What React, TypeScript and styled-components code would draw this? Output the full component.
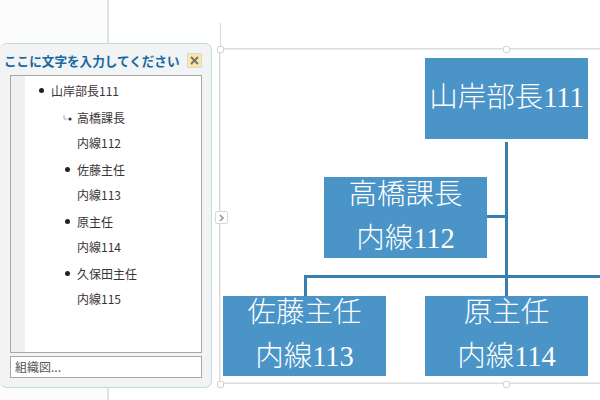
import React from "react";
import styled, { createGlobalStyle } from "styled-components";

const Global = createGlobalStyle`
  html, body { margin: 0; padding: 0; background: #fff; }
`;

const Page = styled.div`
  position: relative;
  width: 600px;
  height: 400px;
  overflow: hidden;
  display: flex;
  align-items: flex-start;
  padding-top: 43px;
  box-sizing: border-box;
  font-family: "Noto Sans CJK JP", sans-serif;
  background: linear-gradient(
    to right,
    #fcfcfc 0,
    #fcfcfc 107px,
    #e2e2e2 107px,
    #e2e2e2 109px,
    #ffffff 109px
  );
`;

const Panel = styled.aside`
  position: relative;
  z-index: 2;
  flex: none;
  width: 212px;
  height: 345px;
  box-sizing: border-box;
  padding: 0 9px 9px 10px;
  display: flex;
  flex-direction: column;
  background: #f1f3f5;
  border: 1px solid #c4d9e2;
  border-left: none;
  border-radius: 7px;
`;

const PanelHead = styled.header`
  height: 31px;
  flex: none;
  margin-left: -6px;
  display: flex;
  align-items: center;
  justify-content: space-between;
  padding-top: 2px;
  box-sizing: border-box;
`;

const PanelTitle = styled.h2`
  margin: 0;
  font-size: 12.6px;
  line-height: 18px;
  font-weight: 700;
  color: #17699f;
  white-space: nowrap;
`;

const CloseButton = styled.button`
  width: 15px;
  height: 15px;
  padding: 0;
  flex: none;
  display: flex;
  align-items: center;
  justify-content: center;
  background: #fbe6a6;
  border: 1px solid #cfdbe3;
`;

const TreeBox = styled.div`
  flex: 1;
  display: flex;
  min-height: 0;
  background: #fff;
  border: 1px solid #a8a8a8;
`;

const TreeGutter = styled.div`
  width: 14px;
  flex: none;
  background: #f0f0f0;
`;

const TreeList = styled.ul`
  list-style: none;
  margin: 0;
  padding: 2px 0 0 0;
  flex: 1;
`;

const TreeItem = styled.li<{ $level: number; $gap?: boolean }>`
  height: ${(p) => (p.$gap ? 27 : 25)}px;
  display: flex;
  align-items: flex-end;
  padding-left: ${(p) => (p.$level === 1 ? 11 : 37)}px;
  font-size: 12px;
  line-height: 25px;
  color: #3a3438;
  white-space: nowrap;
`;

const MarkerSlot = styled.span`
  width: 15px;
  height: 25px;
  flex: none;
  display: flex;
  align-items: center;
  padding-left: 3px;
  box-sizing: border-box;
`;

const Bullet = styled.span`
  width: 5px;
  height: 5px;
  border-radius: 50%;
  background: #222;
`;

const SubArrow = styled.svg`
  margin-left: -2px;
  margin-top: 1px;
`;

const SearchField = styled.div`
  flex: none;
  height: 22px;
  margin-top: 3px;
  box-sizing: border-box;
  padding-left: 4px;
  background: #fff;
  border: 1px solid #a8a8a8;
  font-size: 12px;
  line-height: 20px;
  color: #555;
`;

const Canvas = styled.main`
  position: absolute;
  left: 219px;
  top: 48px;
  width: 400px;
  height: 336px;
  box-sizing: border-box;
  border: 1px solid #dcdcdc;
  outline: 1px solid #eeeeee;
  outline-offset: -2px;

  &::before {
    content: "";
    position: absolute;
    left: 0;
    top: -26px;
    width: 1px;
    height: 25px;
    background: #d8d8d8;
  }
`;

const Handle = styled.span<{ $x: number; $y: number }>`
  position: absolute;
  left: ${(p) => p.$x}px;
  top: ${(p) => p.$y}px;
  width: 7px;
  height: 7px;
  box-sizing: border-box;
  background: #fff;
  border: 1px solid #d4d4d4;
  border-radius: 2px;
`;

const CollapseTab = styled.button`
  position: absolute;
  left: -5px;
  top: 162px;
  width: 13px;
  height: 13px;
  padding: 0;
  display: flex;
  align-items: center;
  justify-content: center;
  background: #fff;
  border: 1px solid #d8d8d8;
  border-radius: 2px;
  z-index: 3;
`;

const OrgNode = styled.div<{ $x: number; $y: number; $h: number }>`
  position: absolute;
  left: ${(p) => p.$x}px;
  top: ${(p) => p.$y}px;
  width: 163px;
  height: ${(p) => p.$h}px;
  padding-bottom: 2px;
  box-sizing: border-box;
  display: flex;
  flex-direction: column;
  align-items: center;
  justify-content: center;
  background: #4a94c8;
  color: #fff;
  font-family: "Liberation Serif", "Noto Sans CJK JP", serif;
  font-weight: 300;
  font-size: 28.5px;
  line-height: 44px;
  white-space: nowrap;
`;

const Connector = styled.div<{ $x: number; $y: number; $w: number; $h: number }>`
  position: absolute;
  left: ${(p) => p.$x}px;
  top: ${(p) => p.$y}px;
  width: ${(p) => p.$w}px;
  height: ${(p) => p.$h}px;
  background: #377fb0;
`;

const tree = [
  { level: 1, text: "山岸部長111", gap: false, marker: "bullet" },
  { level: 2, text: "高橋課長", gap: true, marker: "arrow" },
  { level: 2, text: "内線112", marker: "none" },
  { level: 2, text: "佐藤主任", gap: true, marker: "bullet" },
  { level: 2, text: "内線113", marker: "none" },
  { level: 2, text: "原主任", gap: true, marker: "bullet" },
  { level: 2, text: "内線114", marker: "none" },
  { level: 2, text: "久保田主任", gap: true, marker: "bullet" },
  { level: 2, text: "内線115", marker: "none" },
];

export default function App() {
  return (
    <Page>
      <Global />
      <Panel>
        <PanelHead>
          <PanelTitle>ここに文字を入力してください</PanelTitle>
          <CloseButton aria-label="閉じる">
            <svg width="9" height="9" viewBox="0 0 9 9">
              <path d="M1 1 L8 8 M8 1 L1 8" stroke="#77756c" strokeWidth="2" />
            </svg>
          </CloseButton>
        </PanelHead>
        <TreeBox>
          <TreeGutter />
          <TreeList>
            {tree.map((t) => (
              <TreeItem key={t.text} $level={t.level} $gap={t.gap}>
                <MarkerSlot>
                  {t.marker === "bullet" && <Bullet />}
                  {t.marker === "arrow" && (
                    <SubArrow width="10" height="7" viewBox="0 0 10 7">
                      <path d="M1 0 V4 H4" stroke="#aaa" fill="none" />
                      <circle cx="7" cy="4" r="1.6" fill="#333" />
                    </SubArrow>
                  )}
                </MarkerSlot>
                {t.text}
              </TreeItem>
            ))}
          </TreeList>
        </TreeBox>
        <SearchField>組織図...</SearchField>
      </Panel>
      <Canvas>
        <CollapseTab aria-label="開く">
          <svg width="6" height="8" viewBox="0 0 6 8">
            <path d="M1 1 L4 4 L1 7" stroke="#999" strokeWidth="1.6" fill="none" />
          </svg>
        </CollapseTab>
        <Handle $x={-3} $y={-3} />
        <Handle $x={283} $y={-3} />
        <Handle $x={-3} $y={332} />
        <Handle $x={283} $y={332} />
        <Connector $x={285} $y={93} $w={3} $h={155} />
        <Connector $x={267} $y={166} $w={20} $h={3} />
        <Connector $x={84} $y={226} $w={320} $h={3} />
        <Connector $x={84} $y={226} $w={3} $h={21} />
        <OrgNode $x={205} $y={9} $h={81}>山岸部長111</OrgNode>
        <OrgNode $x={104} $y={128} $h={81}>
          <span>高橋課長</span>
          <span>内線112</span>
        </OrgNode>
        <OrgNode $x={3} $y={247} $h={80}>
          <span>佐藤主任</span>
          <span>内線113</span>
        </OrgNode>
        <OrgNode $x={205} $y={247} $h={80}>
          <span>原主任</span>
          <span>内線114</span>
        </OrgNode>
      </Canvas>
    </Page>
  );
}
